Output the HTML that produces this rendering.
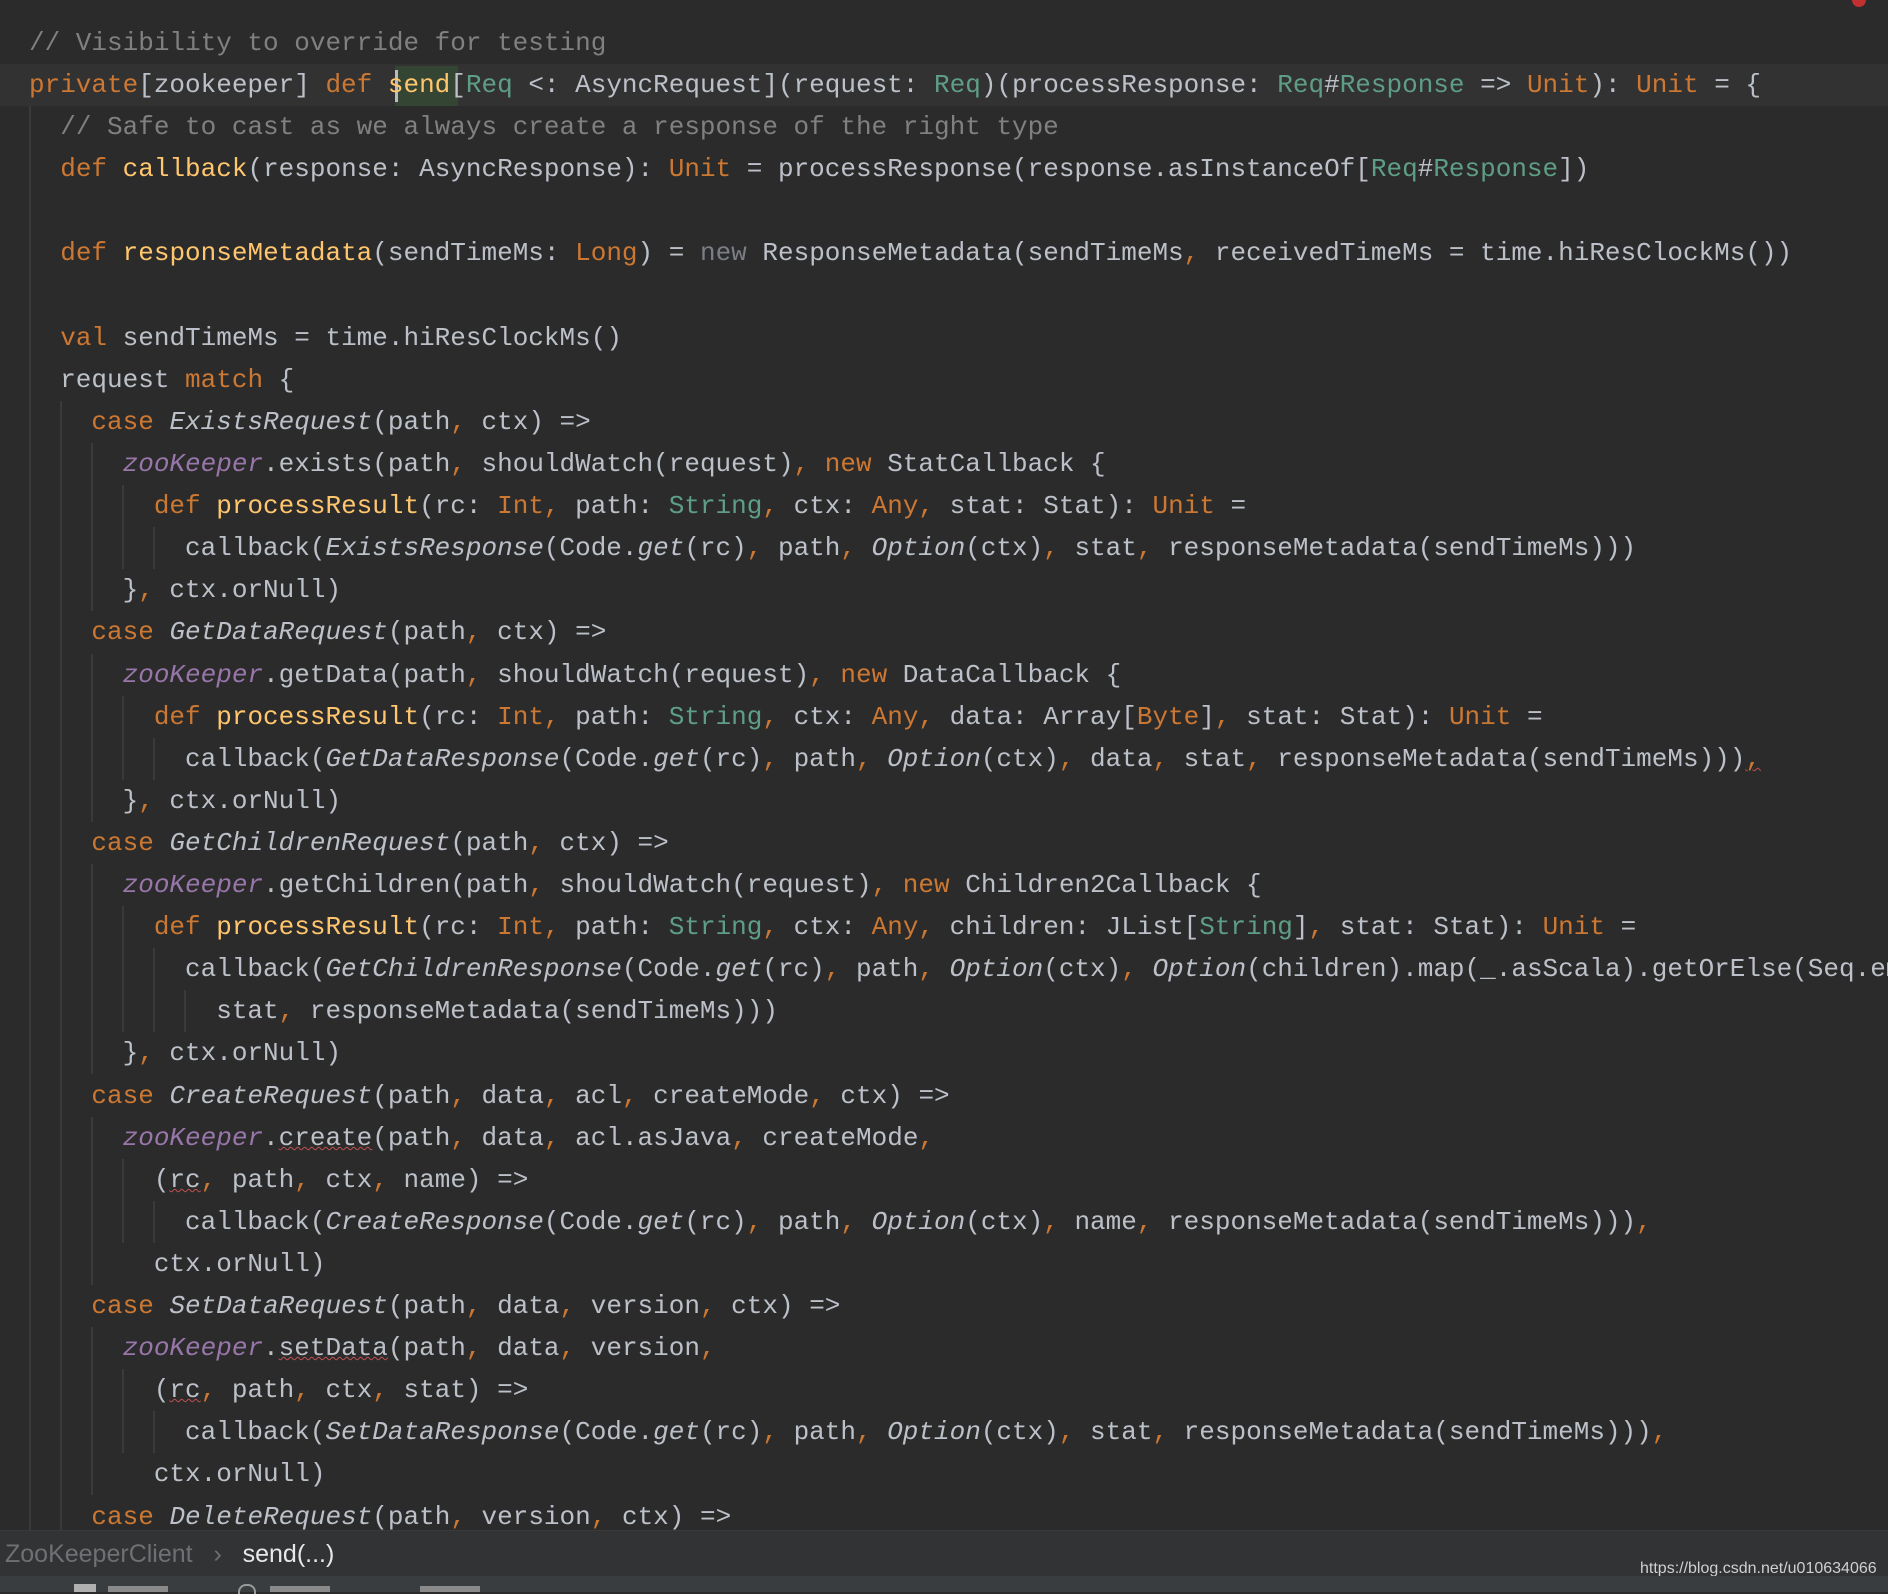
<!DOCTYPE html>
<html><head><meta charset="utf-8">
<style>
html,body{margin:0;padding:0;}
body{width:1888px;height:1592px;background:#2b2b2b;position:relative;overflow:hidden;font-family:"Liberation Mono",monospace;}
.l{position:absolute;left:29px;height:42px;line-height:42px;font-size:26px;color:#bcc0c8;white-space:pre;}
.g{position:absolute;left:29px;height:42px;background:repeating-linear-gradient(to right,#3a3a3a 0 2px,transparent 2px 31.2px);}
.k{color:#cc7832}.f{color:#ffc66d}.t{color:#5f9e86}.c{color:#808080}.p{color:#9876aa;font-style:italic}.i{font-style:italic}.o{color:#cc7832}.n{color:#7a7e85}
.w{text-decoration:underline wavy #c05050;text-decoration-thickness:1px}
</style></head><body>
<div style="position:absolute;left:0;top:64px;width:1888px;height:42px;background:#323232"></div>
<div style="position:absolute;left:395px;top:66px;width:63px;height:40px;background:#344534"></div>
<div style="position:absolute;left:395px;top:70px;width:3px;height:32px;background:#bbbbbb"></div>
<div style="position:absolute;left:1852px;top:0;width:14px;height:7px;background:#c03030;border-radius:0 0 7px 7px"></div>

<div class="g" style="top:106px;width:31px;height:1424px"></div>
<div class="g" style="top:401px;left:60px;width:31px;height:1129px"></div>
<div class="g" style="top:443px;left:91px;width:31px;height:168px"></div>
<div class="g" style="top:485px;left:122px;width:31px;height:84px"></div>
<div class="g" style="top:527px;left:153px;width:31px;height:42px"></div>
<div class="g" style="top:654px;left:91px;width:31px;height:168px"></div>
<div class="g" style="top:696px;left:122px;width:31px;height:84px"></div>
<div class="g" style="top:738px;left:153px;width:31px;height:42px"></div>
<div class="g" style="top:864px;left:91px;width:31px;height:210px"></div>
<div class="g" style="top:906px;left:122px;width:31px;height:126px"></div>
<div class="g" style="top:948px;left:153px;width:31px;height:84px"></div>
<div class="g" style="top:990px;left:184px;width:31px;height:42px"></div>
<div class="g" style="top:1117px;left:91px;width:31px;height:168px"></div>
<div class="g" style="top:1159px;left:122px;width:31px;height:84px"></div>
<div class="g" style="top:1201px;left:153px;width:31px;height:42px"></div>
<div class="g" style="top:1327px;left:91px;width:31px;height:168px"></div>
<div class="g" style="top:1369px;left:122px;width:31px;height:84px"></div>
<div class="g" style="top:1411px;left:153px;width:31px;height:42px"></div>

<div class="l" style="top:22px"><span class="c">// Visibility to override for testing</span></div>
<div class="l" style="top:64px"><span class="k">private</span>[zookeeper] <span class="k">def</span> <span class="f">send</span>[<span class="t">Req</span> &lt;: AsyncRequest](request: <span class="t">Req</span>)(processResponse: <span class="t">Req</span>#<span class="t">Response</span> =&gt; <span class="k">Unit</span>): <span class="k">Unit</span> = {</div>
<div class="l" style="top:106px">  <span class="c">// Safe to cast as we always create a response of the right type</span></div>
<div class="l" style="top:148px">  <span class="k">def</span> <span class="f">callback</span>(response: AsyncResponse): <span class="k">Unit</span> = processResponse(response.asInstanceOf[<span class="t">Req</span>#<span class="t">Response</span>])</div>
<div class="l" style="top:232px">  <span class="k">def</span> <span class="f">responseMetadata</span>(sendTimeMs: <span class="k">Long</span>) = <span class="n">new</span> ResponseMetadata(sendTimeMs<span class="o">,</span> receivedTimeMs = time.hiResClockMs())</div>
<div class="l" style="top:317px">  <span class="k">val</span> sendTimeMs = time.hiResClockMs()</div>
<div class="l" style="top:359px">  request <span class="k">match</span> {</div>
<div class="l" style="top:401px">    <span class="k">case</span> <span class="i">ExistsRequest</span>(path<span class="o">,</span> ctx) =&gt;</div>
<div class="l" style="top:443px">      <span class="p">zooKeeper</span>.exists(path<span class="o">,</span> shouldWatch(request)<span class="o">,</span> <span class="k">new</span> StatCallback {</div>
<div class="l" style="top:485px">        <span class="k">def</span> <span class="f">processResult</span>(rc: <span class="k">Int</span><span class="o">,</span> path: <span class="t">String</span><span class="o">,</span> ctx: <span class="k">Any</span><span class="o">,</span> stat: Stat): <span class="k">Unit</span> =</div>
<div class="l" style="top:527px">          callback(<span class="i">ExistsResponse</span>(Code.<span class="i">get</span>(rc)<span class="o">,</span> path<span class="o">,</span> <span class="i">Option</span>(ctx)<span class="o">,</span> stat<span class="o">,</span> responseMetadata(sendTimeMs)))</div>
<div class="l" style="top:569px">      }<span class="o">,</span> ctx.orNull)</div>
<div class="l" style="top:611px">    <span class="k">case</span> <span class="i">GetDataRequest</span>(path<span class="o">,</span> ctx) =&gt;</div>
<div class="l" style="top:654px">      <span class="p">zooKeeper</span>.getData(path<span class="o">,</span> shouldWatch(request)<span class="o">,</span> <span class="k">new</span> DataCallback {</div>
<div class="l" style="top:696px">        <span class="k">def</span> <span class="f">processResult</span>(rc: <span class="k">Int</span><span class="o">,</span> path: <span class="t">String</span><span class="o">,</span> ctx: <span class="k">Any</span><span class="o">,</span> data: Array[<span class="k">Byte</span>]<span class="o">,</span> stat: Stat): <span class="k">Unit</span> =</div>
<div class="l" style="top:738px">          callback(<span class="i">GetDataResponse</span>(Code.<span class="i">get</span>(rc)<span class="o">,</span> path<span class="o">,</span> <span class="i">Option</span>(ctx)<span class="o">,</span> data<span class="o">,</span> stat<span class="o">,</span> responseMetadata(sendTimeMs)))<span class="o w">,</span></div>
<div class="l" style="top:780px">      }<span class="o">,</span> ctx.orNull)</div>
<div class="l" style="top:822px">    <span class="k">case</span> <span class="i">GetChildrenRequest</span>(path<span class="o">,</span> ctx) =&gt;</div>
<div class="l" style="top:864px">      <span class="p">zooKeeper</span>.getChildren(path<span class="o">,</span> shouldWatch(request)<span class="o">,</span> <span class="k">new</span> Children2Callback {</div>
<div class="l" style="top:906px">        <span class="k">def</span> <span class="f">processResult</span>(rc: <span class="k">Int</span><span class="o">,</span> path: <span class="t">String</span><span class="o">,</span> ctx: <span class="k">Any</span><span class="o">,</span> children: JList[<span class="t">String</span>]<span class="o">,</span> stat: Stat): <span class="k">Unit</span> =</div>
<div class="l" style="top:948px">          callback(<span class="i">GetChildrenResponse</span>(Code.<span class="i">get</span>(rc)<span class="o">,</span> path<span class="o">,</span> <span class="i">Option</span>(ctx)<span class="o">,</span> <span class="i">Option</span>(children).map(_.asScala).getOrElse(Seq.empty)<span class="o">,</span></div>
<div class="l" style="top:990px">            stat<span class="o">,</span> responseMetadata(sendTimeMs)))</div>
<div class="l" style="top:1032px">      }<span class="o">,</span> ctx.orNull)</div>
<div class="l" style="top:1075px">    <span class="k">case</span> <span class="i">CreateRequest</span>(path<span class="o">,</span> data<span class="o">,</span> acl<span class="o">,</span> createMode<span class="o">,</span> ctx) =&gt;</div>
<div class="l" style="top:1117px">      <span class="p">zooKeeper</span>.<span class="w">create</span>(path<span class="o">,</span> data<span class="o">,</span> acl.asJava<span class="o">,</span> createMode<span class="o">,</span></div>
<div class="l" style="top:1159px">        (<span class="w">rc</span><span class="o">,</span> path<span class="o">,</span> ctx<span class="o">,</span> name) =&gt;</div>
<div class="l" style="top:1201px">          callback(<span class="i">CreateResponse</span>(Code.<span class="i">get</span>(rc)<span class="o">,</span> path<span class="o">,</span> <span class="i">Option</span>(ctx)<span class="o">,</span> name<span class="o">,</span> responseMetadata(sendTimeMs)))<span class="o">,</span></div>
<div class="l" style="top:1243px">        ctx.orNull)</div>
<div class="l" style="top:1285px">    <span class="k">case</span> <span class="i">SetDataRequest</span>(path<span class="o">,</span> data<span class="o">,</span> version<span class="o">,</span> ctx) =&gt;</div>
<div class="l" style="top:1327px">      <span class="p">zooKeeper</span>.<span class="w">setData</span>(path<span class="o">,</span> data<span class="o">,</span> version<span class="o">,</span></div>
<div class="l" style="top:1369px">        (<span class="w">rc</span><span class="o">,</span> path<span class="o">,</span> ctx<span class="o">,</span> stat) =&gt;</div>
<div class="l" style="top:1411px">          callback(<span class="i">SetDataResponse</span>(Code.<span class="i">get</span>(rc)<span class="o">,</span> path<span class="o">,</span> <span class="i">Option</span>(ctx)<span class="o">,</span> stat<span class="o">,</span> responseMetadata(sendTimeMs)))<span class="o">,</span></div>
<div class="l" style="top:1453px">        ctx.orNull)</div>
<div class="l" style="top:1496px">    <span class="k">case</span> <span class="i">DeleteRequest</span>(path<span class="o">,</span> version<span class="o">,</span> ctx) =&gt;</div>

<div style="position:absolute;left:0;top:1530px;width:1888px;height:46px;background:#313335;border-top:1px solid #3a3a3a;font-family:'Liberation Sans',sans-serif;font-size:25px;line-height:46px;white-space:pre"><span style="color:#6e7073;padding-left:5px">ZooKeeperClient</span><span style="color:#6e7073">   ›   </span><span style="color:#e8e8e8">send(...)</span></div>
<div style="position:absolute;left:1640px;top:1560px;font-family:'Liberation Sans',sans-serif;font-size:16px;color:#d0d0d0;white-space:nowrap">https://blog.csdn.net/u010634066</div>
<div style="position:absolute;left:0;top:1576px;width:1888px;height:16px;background:#3a3d3f"></div>
<div style="position:absolute;left:74px;top:1584px;width:22px;height:8px;background:#b0b0b0"></div>
<div style="position:absolute;left:108px;top:1586px;width:60px;height:6px;background:#8a8a8a"></div>
<div style="position:absolute;left:238px;top:1584px;width:14px;height:8px;border:2px solid #9a9a9a;border-bottom:none;border-radius:8px 8px 0 0"></div>
<div style="position:absolute;left:270px;top:1586px;width:60px;height:6px;background:#8a8a8a"></div>
<div style="position:absolute;left:420px;top:1586px;width:60px;height:6px;background:#8a8a8a"></div>
</body></html>
